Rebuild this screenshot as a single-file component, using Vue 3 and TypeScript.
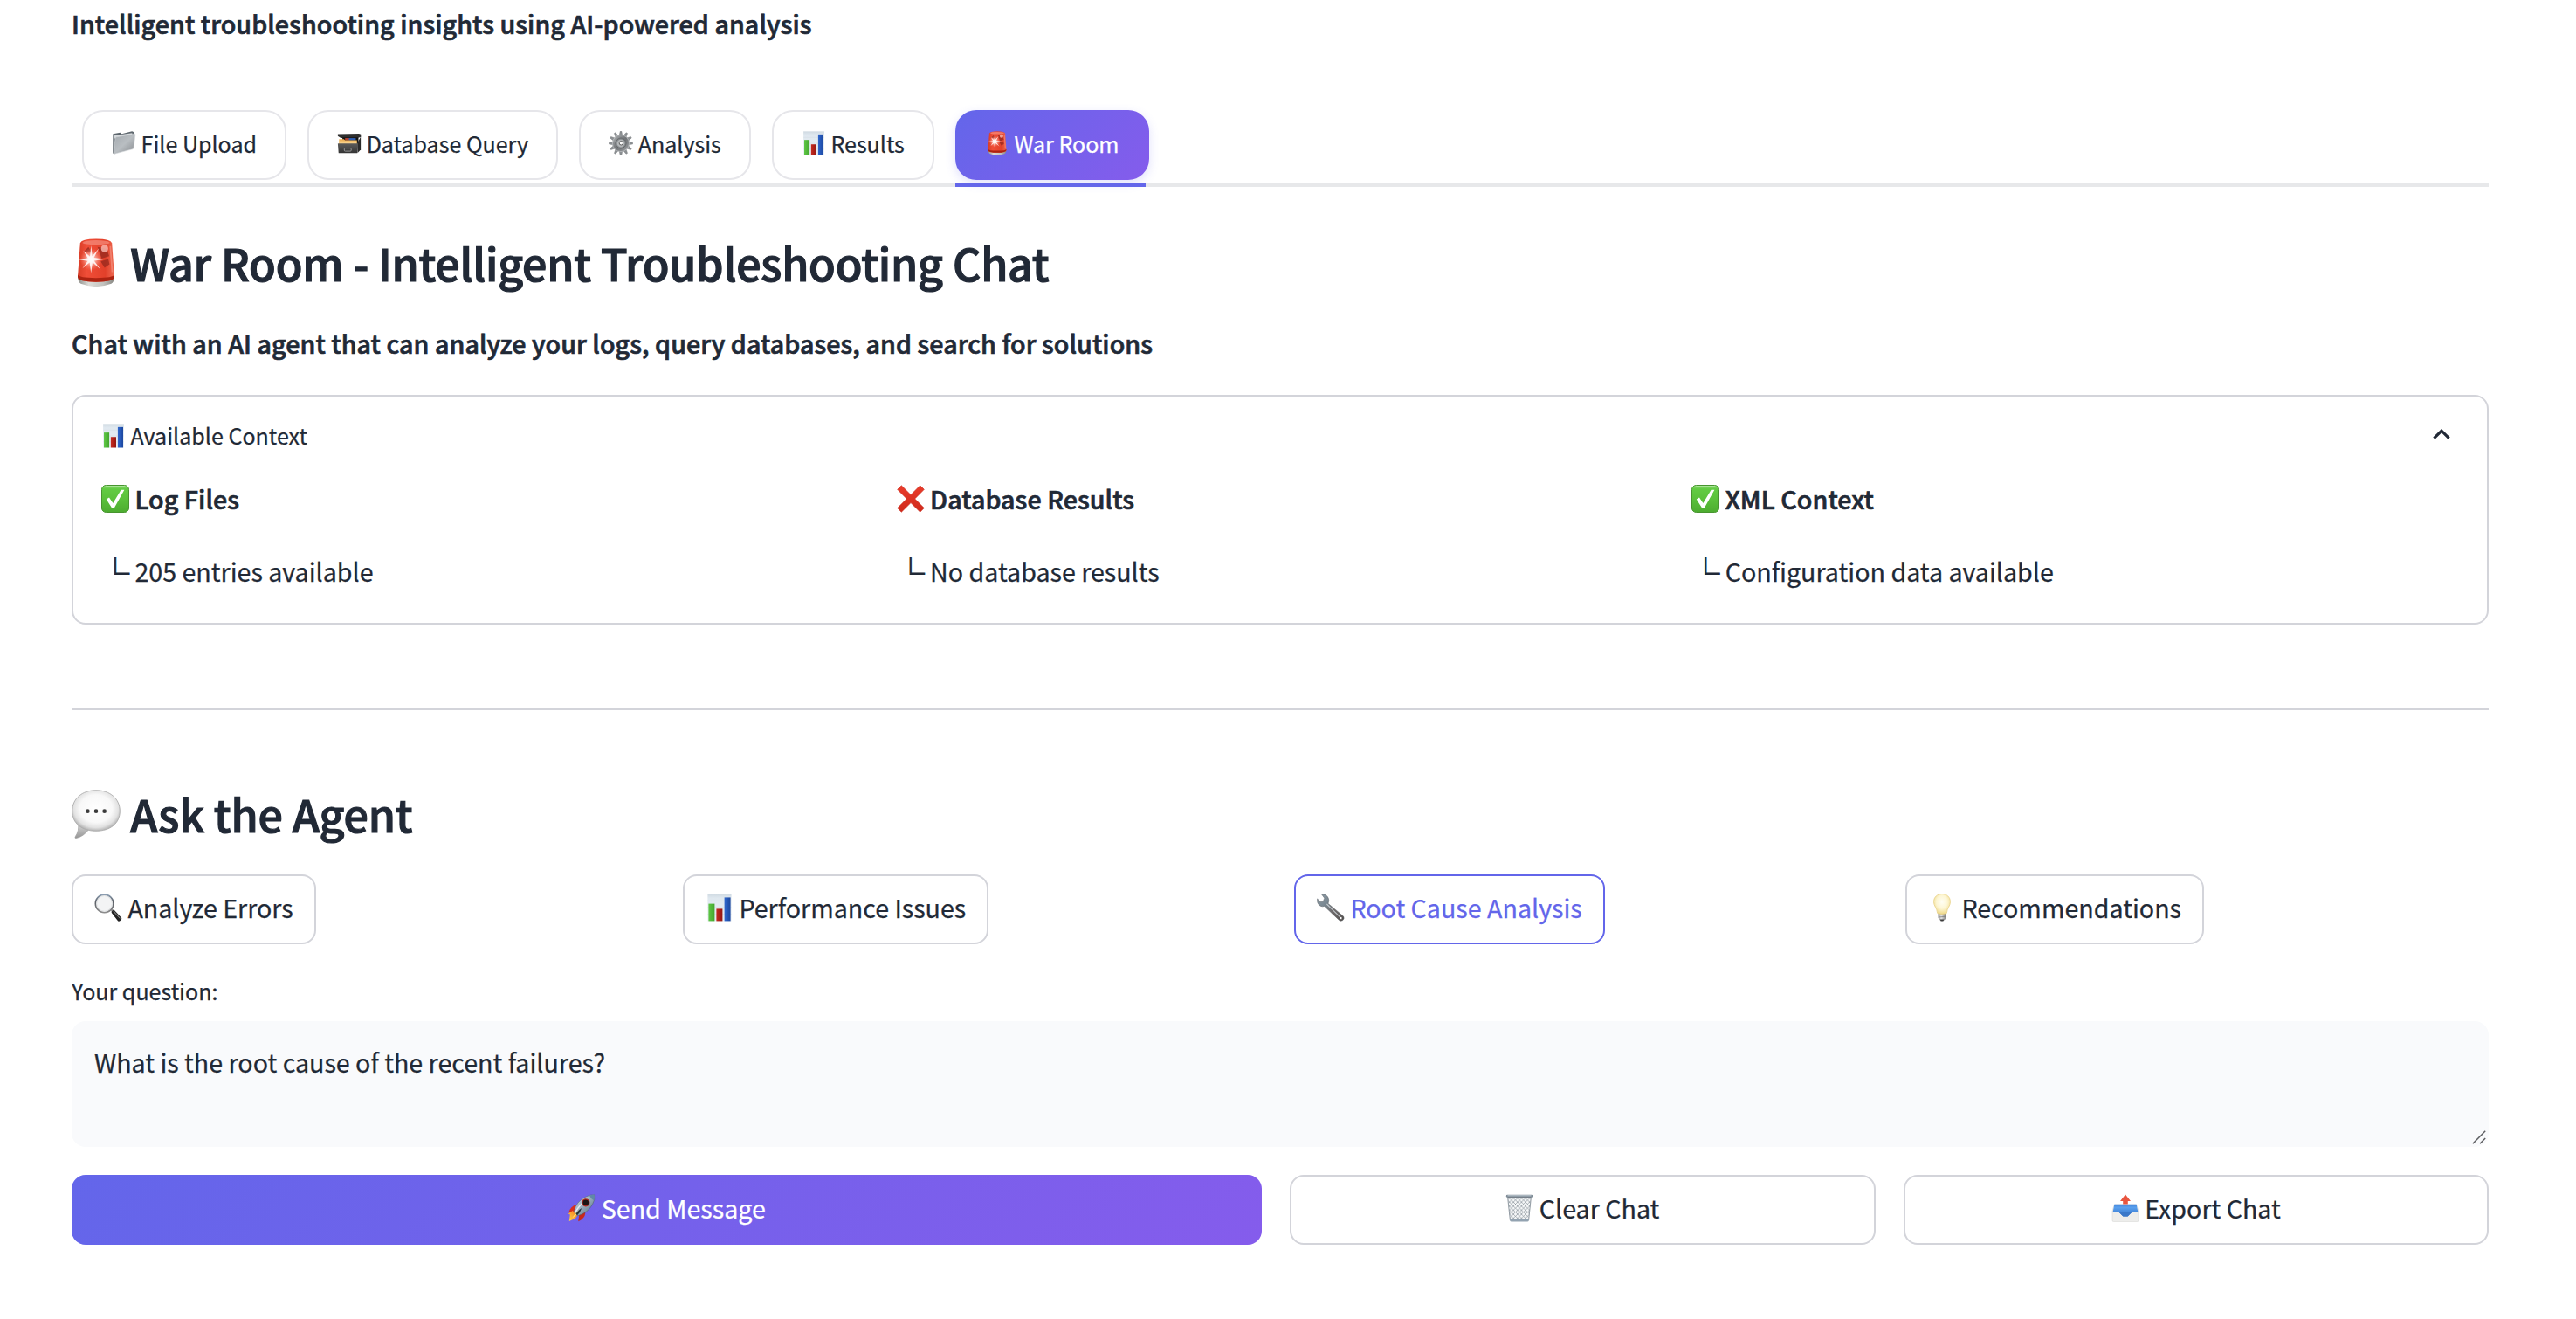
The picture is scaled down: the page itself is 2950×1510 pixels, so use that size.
<script setup lang="ts">
import { ref } from 'vue'

interface Item {
  icon: string
  label: string
  active?: boolean
}

interface ContextItem {
  icon: string
  title: string
  detail: string
}

const tabs: Item[] = [
  { icon: 'folder', label: 'File Upload' },
  { icon: 'cabinet', label: 'Database Query' },
  { icon: 'gear', label: 'Analysis' },
  { icon: 'chart', label: 'Results' },
  { icon: 'siren', label: 'War Room', active: true },
]

const context: ContextItem[] = [
  { icon: 'check', title: 'Log Files', detail: '205 entries available' },
  { icon: 'cross', title: 'Database Results', detail: 'No database results' },
  { icon: 'check', title: 'XML Context', detail: 'Configuration data available' },
]

const prompts: Item[] = [
  { icon: 'lens', label: 'Analyze Errors' },
  { icon: 'chart', label: 'Performance Issues' },
  { icon: 'wrench', label: 'Root Cause Analysis', active: true },
  { icon: 'bulb', label: 'Recommendations' },
]

const question = ref('What is the root cause of the recent failures?')
const gearTeeth = Array.from({ length: 12 }, (_, i) => i * 30)
</script>

<template>
  <svg class="sprites" width="0" height="0" aria-hidden="true">
    <defs>
      <linearGradient id="gFolder" x1="0" y1="0" x2="1" y2="1">
        <stop offset="0" stop-color="#a3a9ae" /><stop offset=".5" stop-color="#b9bec2" /><stop offset="1" stop-color="#85898d" />
      </linearGradient>
      <linearGradient id="gCab" x1="0" y1="0" x2="0" y2="1">
        <stop offset="0" stop-color="#5b5b5b" /><stop offset="1" stop-color="#343434" />
      </linearGradient>
      <linearGradient id="gGear" x1="0" y1="0" x2="1" y2="1">
        <stop offset="0" stop-color="#a9acae" /><stop offset=".5" stop-color="#6f7275" /><stop offset="1" stop-color="#96999c" />
      </linearGradient>
      <linearGradient id="gChart" x1="0" y1="0" x2="0" y2="1">
        <stop offset="0" stop-color="#cfd9e1" /><stop offset=".15" stop-color="#dfe8ef" /><stop offset="1" stop-color="#e9eff4" />
      </linearGradient>
      <linearGradient id="gGreenBar" x1="0" y1="0" x2="1" y2="0">
        <stop offset="0" stop-color="#5fc746" /><stop offset="1" stop-color="#43a62d" />
      </linearGradient>
      <linearGradient id="gRedBar" x1="0" y1="0" x2="1" y2="0">
        <stop offset="0" stop-color="#c52a20" /><stop offset="1" stop-color="#951711" />
      </linearGradient>
      <linearGradient id="gBlueBar" x1="0" y1="0" x2="1" y2="0">
        <stop offset="0" stop-color="#2f66cc" /><stop offset="1" stop-color="#1c479f" />
      </linearGradient>
      <linearGradient id="gSiren" x1="0" y1="0" x2="1" y2="0">
        <stop offset="0" stop-color="#d63b25" /><stop offset=".25" stop-color="#f04e38" /><stop offset=".75" stop-color="#e2402a" /><stop offset="1" stop-color="#ee6a52" />
      </linearGradient>
      <linearGradient id="gBase" x1="0" y1="0" x2="1" y2="0">
        <stop offset="0" stop-color="#8b8b86" /><stop offset=".3" stop-color="#dcdcd8" /><stop offset=".7" stop-color="#c2c2be" /><stop offset="1" stop-color="#858580" />
      </linearGradient>
      <radialGradient id="gGlow">
        <stop offset="0" stop-color="#fff" /><stop offset=".3" stop-color="#ffd9d2" stop-opacity=".8" /><stop offset="1" stop-color="#ff8f7c" stop-opacity="0" />
      </radialGradient>
      <linearGradient id="gCheck" x1="0" y1="0" x2="0" y2="1">
        <stop offset="0" stop-color="#8edb74" /><stop offset=".14" stop-color="#62cb42" /><stop offset=".5" stop-color="#5bc13b" /><stop offset="1" stop-color="#4dac30" />
      </linearGradient>
      <linearGradient id="gCross" x1="0" y1="0" x2="0" y2="1">
        <stop offset="0" stop-color="#ea3c2b" /><stop offset="1" stop-color="#cf2a1c" />
      </linearGradient>
      <radialGradient id="gBubble" cx=".5" cy=".45" r=".55">
        <stop offset="0" stop-color="#fff" /><stop offset=".62" stop-color="#f8f8f8" /><stop offset=".85" stop-color="#e2e2e2" /><stop offset="1" stop-color="#b5b5b5" />
      </radialGradient>
      <linearGradient id="gTail" x1="0" y1="0" x2="0" y2="1">
        <stop offset="0" stop-color="#d6d6d6" /><stop offset="1" stop-color="#969696" />
      </linearGradient>
      <linearGradient id="gHandle" x1="0" y1="1" x2="1" y2="0">
        <stop offset="0" stop-color="#0b0b0b" /><stop offset=".6" stop-color="#2b2b2b" /><stop offset="1" stop-color="#777" />
      </linearGradient>
      <linearGradient id="gRim" x1="0" y1="0" x2="0" y2="1">
        <stop offset="0" stop-color="#8ea0b4" /><stop offset=".4" stop-color="#5a5f66" /><stop offset="1" stop-color="#8c8c8c" />
      </linearGradient>
      <linearGradient id="gWrench" x1="0" y1="0" x2="1" y2="1">
        <stop offset="0" stop-color="#8f9da7" /><stop offset=".35" stop-color="#788690" /><stop offset=".6" stop-color="#6f6b6c" /><stop offset="1" stop-color="#55504f" />
      </linearGradient>
      <radialGradient id="gBulb" cx=".5" cy=".4" r=".6">
        <stop offset="0" stop-color="#fffef4" /><stop offset=".55" stop-color="#fdf6d3" /><stop offset="1" stop-color="#efd98a" />
      </radialGradient>
      <linearGradient id="gScrew" x1="0" y1="0" x2="1" y2="0">
        <stop offset="0" stop-color="#8d8d8d" /><stop offset=".4" stop-color="#e4e4e4" /><stop offset="1" stop-color="#7d7d7d" />
      </linearGradient>
      <linearGradient id="gHull" x1="0" y1="0" x2="1" y2="1">
        <stop offset="0" stop-color="#d9e4ec" /><stop offset=".45" stop-color="#9db2c2" /><stop offset="1" stop-color="#4f6678" />
      </linearGradient>
      <linearGradient id="gFlame" x1="1" y1="0" x2="0" y2="1">
        <stop offset="0" stop-color="#f8741d" /><stop offset="1" stop-color="#ffd84a" />
      </linearGradient>
      <linearGradient id="gTray" x1="0" y1="0" x2="0" y2="1">
        <stop offset="0" stop-color="#3f7fd6" /><stop offset=".25" stop-color="#5aa0ee" /><stop offset="1" stop-color="#2f70c8" />
      </linearGradient>
      <pattern id="pMesh" width="4.600" height="4.600" patternUnits="userSpaceOnUse">
        <path d="M0 0L4.600 4.600M4.600 0L0 4.600" stroke="#78838c" stroke-width=".6" />
      </pattern>
    </defs>

    <symbol id="folder" viewBox="0 0 32 32">
      <path d="M1.500 3.600L11 2l2 1.600L26.500 .4l2 .6L29 6 4 30 1.400 29z" fill="#5d666d" />
      <path d="M2.600 6L26.800 2.600l-.4 3L4 10z" fill="#d5d9dc" />
      <path d="M4.600 9.200Q4.800 8 6 7.800L29.600 3.600q1.400-.1 1.200 1.200L28.600 22q-.2 1.300-1.600 1.800L4 29.800q-1.600.2-1.400-1.200z" fill="url(#gFolder)" stroke="#d4d8da" stroke-width=".7" />
    </symbol>
    <symbol id="cabinet" viewBox="0 0 32 32">
      <path d="M1 4L28.600 3.400l2.600 1v3.200L27 9H5L1 6.600z" fill="#2e2e2e" />
      <path d="M7 8.400h21v10H7z" fill="#141414" />
      <path d="M10.500 9.200h6V12h-6z" fill="#b8402f" />
      <path d="M15.500 9.200h9V12h-9z" fill="#2f5fb4" />
      <path d="M2.600 10.600h6.400l1.400 1.400h15.600V19H2.600z" fill="#eeb35a" />
      <path d="M2.600 13.200h23V19h-23z" fill="#f7cf87" />
      <path d="M26.400 15.600L31 7.400v16.800L27 28.600z" fill="#2a2a2a" />
      <path d="M1 16.400h26.400l-.8 12.400H2z" fill="url(#gCab)" />
      <rect x="9.500" y="22.400" width="9" height="4" rx="1.200" fill="none" stroke="#989898" stroke-width="1.100" />
    </symbol>
    <symbol id="gear" viewBox="0 0 32 32">
      <path v-for="a in gearTeeth" :key="a" d="M13.900 6L15 .4h2L18.100 6z" fill="#8d9194" stroke="#6a6e71" stroke-width=".4" :transform="`rotate(${a} 16 16)`" />
      <circle cx="16" cy="16" r="9" fill="none" stroke="url(#gGear)" stroke-width="4.400" />
      <circle cx="16" cy="16" r="10.900" fill="none" stroke="#c3c6c8" stroke-width=".8" />
      <circle cx="16" cy="16" r="6.800" fill="#85898c" stroke="#4b4e50" stroke-width=".8" />
      <circle cx="16" cy="16" r="5" fill="#b4b7b9" />
      <circle cx="16.400" cy="15.800" r="2.500" fill="#fafafa" stroke="#4c4c4c" stroke-width="1" />
    </symbol>
    <symbol id="chart" viewBox="0 0 32 32">
      <path d="M2.400 .4h27.200v31.200H2.400z" fill="url(#gChart)" />
      <path d="M2.400 8.400h27.200M2.400 16h27.200M2.400 23.800h27.200" stroke="#d2dce4" stroke-width=".6" />
      <path d="M3.400 11.600h7v19.800h-7z" fill="url(#gGreenBar)" />
      <path d="M12.400 17.400h7v14h-7z" fill="url(#gRedBar)" />
      <path d="M21.600 4.400h7v27h-7z" fill="url(#gBlueBar)" />
    </symbol>
    <symbol id="siren" viewBox="0 0 32 32">
      <path d="M4 25.200q.2 3.400 2 4.400 9.800 3.800 20 0 1.800-1 2-4.400z" fill="url(#gBase)" />
      <path d="M5.600 3.200Q6.400 .3 16 .3t10.400 2.900L28 25q-.2 3.400-12 3.400T4 25z" fill="url(#gSiren)" />
      <path d="M4.100 23.600q.6 2.200 11.900 2.200t11.900-2.200L28 25.200q-.4 3.200-12 3.200T4 25.200z" fill="#ac2312" />
      <path d="M7 2.800Q8.600 1.200 16 1.200t9 1.600Q23.600 4 16 4T7 2.800z" fill="#f4897a" opacity=".75" />
      <path d="M17 5.500l6 1.200 1.600 4.800-5 1.600zM19 15l5-1.600.8 3.400-3.200 2.400zM7.600 9L11 5.600l2.400 3.800z" fill="#94281d" opacity=".75" />
      <circle cx="21.600" cy="6.600" r="2.300" fill="#f7b4aa" opacity=".85" />
      <circle cx="12.800" cy="13.600" r="7.200" fill="url(#gGlow)" />
      <path d="M12.800 4.600l.7 6.900 4.300-4.900-3.200 6 7.400 1-7.300.9 4.300 5.800-5.300-4.700-1 7-.9-6.900-4.700 3.900 3.500-4.900-6.400-1 6.400-.9-3-5 4.400 4.100z" fill="#fff" opacity=".85" />
      <path d="M25.300 5l1.300 17" stroke="#f79a8a" stroke-width="1" opacity=".6" />
    </symbol>
    <symbol id="check" viewBox="0 0 32 32">
      <rect x=".5" y=".5" width="31" height="31" rx="5" fill="url(#gCheck)" stroke="#47952f" stroke-width="1" />
      <path d="M3.500 3Q4.500 1.700 6 1.700h20q1.500 0 2.500 1.300" fill="none" stroke="#b4e8a2" stroke-width="1.100" />
      <path d="M5.800 16.400l3.200-1.900 4.400 6.500L22.600 5.800h3.800L14.500 27h-2.100z" fill="#fff" />
    </symbol>
    <symbol id="cross" viewBox="0 0 32 32">
      <path d="M5.300 .8L16 11.400 26.700 .8 31.300 5.300 20.700 16l10.600 10.600-4.600 4.600L16 20.600 5.300 31.200.7 26.600 11.300 16 .7 5.300z" fill="url(#gCross)" stroke="#c72a1c" stroke-width=".6" />
    </symbol>
    <symbol id="bubble" viewBox="0 0 32 32">
      <path d="M4.200 22.400q1 4.200-1.900 8.600-.3.900.8.700 4.500-.8 8.600-6.200z" fill="url(#gTail)" stroke="#a2a2a2" stroke-width=".4" />
      <path d="M16 .4C25.200.4 31.600 6 31.600 14S25.500 27 16 27 .4 22 .4 14 6.800.4 16 .4z" fill="url(#gBubble)" stroke="#acacac" stroke-width=".5" />
      <circle cx="10.500" cy="14.100" r="1.350" fill="#3b3b3b" /><circle cx="16" cy="14.100" r="1.350" fill="#3b3b3b" /><circle cx="21.500" cy="14.100" r="1.350" fill="#3b3b3b" />
    </symbol>
    <symbol id="lens" viewBox="0 0 32 32">
      <path d="M18.500 19.500l2-2 3 2.600-2.200 2.200z" fill="#9a9a9a" />
      <path d="M19.600 21.800q0-2.400 2.800-3.200L31 27.400q.8 1.600-.6 3.200t-3.200 1z" fill="url(#gHandle)" />
      <path d="M22 20.400l7.600 8" stroke="#b9b9b9" stroke-width=".8" />
      <circle cx="11.600" cy="11.400" r="10.300" fill="#f3f4f5" stroke="url(#gRim)" stroke-width="1.600" />
      <circle cx="11.600" cy="11.400" r="8.900" fill="none" stroke="#dadcde" stroke-width=".9" />
    </symbol>
    <symbol id="wrench" viewBox="0 0 32 32">
      <path d="M7.800 .8L5.200 .5 8.800 5.200l-1.600 4-4.200.3L.7 5.800q-1 6 3.500 8.400 2.500 1.200 4.400.2l16.700 15.800q2 2 4.400.4 2.400-2.200.8-4.600L13 11.400q1.800-4.600-.5-7.700Q10.400 1 7.800.8z" fill="url(#gWrench)" stroke="#5c6266" stroke-width=".5" />
      <path d="M11.400 12l15 14.600" stroke="#c3c9cd" stroke-width="1.100" />
      <circle cx="27.600" cy="28" r="1.500" fill="#fff" stroke="#3f3b3a" stroke-width=".6" />
    </symbol>
    <symbol id="bulb" viewBox="0 0 32 32">
      <path d="M11.500 22h9v5.500q-.6 2.500-2.700 3.200-1.800.8-3.600 0-2.100-.7-2.700-3.200z" fill="url(#gScrew)" />
      <path d="M12 24.400l8-.8M12 27l8-.8" stroke="#777" stroke-width=".7" />
      <path d="M13.600 29.600h4.800L17.400 31.500h-2.800z" fill="#3c3c3c" />
      <path d="M16 .5c5.600 0 9.500 3.700 9.500 9 0 4.500-3.700 7-4.200 12.900q-2.300 1-5.300 1t-5.300-1C10.200 16.500 6.500 14 6.500 9.500c0-5.300 3.900-9 9.500-9z" fill="url(#gBulb)" stroke="#e8d289" stroke-width=".8" />
    </symbol>
    <symbol id="rocket" viewBox="0 0 32 32">
      <path d="M14 12.500Q7 11 2.800 17.500L1 21.200l8.500-2z" fill="#d8301e" />
      <path d="M20 18.500q1.500 7-4.800 11.200l-3 1.500 1.300-8.700z" fill="#c9281a" />
      <path d="M5.800 19L.8 22.400l2 1L1.800 31l7-3.200 2.500-3.200z" fill="url(#gFlame)" />
      <path d="M7.200 20.200Q10 8 21 3q5.500-2.600 9.600-2.200Q32 6 28.200 12.600 22.500 22 11.400 24.800z" fill="url(#gHull)" stroke="#49596a" stroke-width=".5" />
      <path d="M24.800 1.500q3.200-1 5.800-.7.600 3.300-.6 6.500-3.300-1.800-5.200-5.800z" fill="#5f88a8" />
      <path d="M9 20.500Q14 12 22 5.500" stroke="#fff" stroke-width="1.600" fill="none" opacity=".75" />
      <circle cx="20.800" cy="9.800" r="4" fill="#1c1414" stroke="#b72c22" stroke-width="1.300" />
      <path d="M5.200 27.500Q9 21 14.500 17.500 12.500 23 5.200 27.500z" fill="#ffe36c" />
      <path d="M9.400 22.600q3.200-5 6.800-6.600-1.600 5-5.200 8.200z" fill="#25303a" />
    </symbol>
    <symbol id="bin" viewBox="0 0 32 32">
      <path d="M2.600 3.500h26.800L26.600 30H5.400z" fill="#f4f6f7" />
      <path d="M2.600 3.500h26.800L26.600 30H5.400z" fill="url(#pMesh)" stroke="#87919a" stroke-width=".9" />
      <path d="M5 28.400h22l-.4 2q-.2 1.100-1.400 1.100H6.800q-1.200 0-1.400-1.100z" fill="#93a3b1" />
      <rect x=".8" y=".8" width="30.400" height="3" rx="1.400" fill="#7f8c97" />
      <path d="M2.500 1.800h27" stroke="#d0d9e0" stroke-width=".8" />
      <path d="M2.600 4.200h26.800" stroke="#4c545b" stroke-width=".8" />
    </symbol>
    <symbol id="tray" viewBox="0 0 32 32">
      <path d="M1 19.500L3.300 12h25.400L31 19.500V30q0 1.600-1.600 1.600H2.600Q1 31.600 1 30z" fill="#ededeb" stroke="#d0d0ce" stroke-width=".5" />
      <path d="M3.400 11.800h25.200L30.400 20.500h-6.600L18.600 25.600h-5.200L8.200 20.500H1.600z" fill="url(#gTray)" />
      <path d="M8.400 20.500h15.200L18.600 25.600h-5.200z" fill="#3a78c9" />
      <path d="M16 .6l6 7.400h-3.200v3.500h-5.600V8H10z" fill="#e8553f" />
    </symbol>
  </svg>

  <main class="page">
    <p class="tagline strong">Intelligent troubleshooting insights using AI-powered analysis</p>

    <nav class="tabs">
      <button v-for="t in tabs" :key="t.label" class="tab" :class="{ active: t.active }">
        <svg class="emoji"><use :href="`#${t.icon}`" /></svg><span>{{ t.label }}</span>
      </button>
    </nav>

    <h2 class="title war"><svg class="emoji"><use href="#siren" /></svg><span>War Room - Intelligent Troubleshooting Chat</span></h2>
    <p class="lead strong">Chat with an AI agent that can analyze your logs, query databases, and search for solutions</p>

    <section class="panel">
      <header class="panel-head">
        <div class="small"><svg class="emoji"><use href="#chart" /></svg><span>Available Context</span></div>
        <svg class="chevron" viewBox="0 0 20 12"><path d="M1.400 10.600L10 2.200l8.600 8.400" fill="none" stroke="#212936" stroke-width="3.200" /></svg>
      </header>
      <div class="context">
        <div v-for="c in context" :key="c.title">
          <p class="strong"><svg class="emoji"><use :href="`#${c.icon}`" /></svg><span>{{ c.title }}</span></p>
          <p class="detail"><span class="branch">└</span><span>{{ c.detail }}</span></p>
        </div>
      </div>
    </section>

    <hr class="rule" />

    <h2 class="title ask"><svg class="emoji"><use href="#bubble" /></svg><span>Ask the Agent</span></h2>

    <div class="prompts">
      <div v-for="p in prompts" :key="p.label">
        <button class="btn" :class="{ focus: p.active }">
          <svg class="emoji"><use :href="`#${p.icon}`" /></svg><span>{{ p.label }}</span>
        </button>
      </div>
    </div>

    <label class="label small">Your question:</label>
    <div class="field">
      <textarea v-model="question" class="input" spellcheck="false"></textarea>
      <svg class="grip" viewBox="0 0 16 16"><path d="M.8 15.200L15.200.8M9 15.200l6.200-6.200" stroke="#5c5d60" stroke-width="1.500" fill="none" /></svg>
    </div>

    <div class="actions">
      <button class="btn primary"><svg class="emoji"><use href="#rocket" /></svg><span>Send Message</span></button>
      <button class="btn"><svg class="emoji"><use href="#bin" /></svg><span>Clear Chat</span></button>
      <button class="btn"><svg class="emoji"><use href="#tray" /></svg><span>Export Chat</span></button>
    </div>
  </main>
</template>

<style>
body {
  background: #fff;
}
</style>

<style scoped>
.sprites {
  position: absolute;
}
.page {
  --s: 32;
  box-sizing: border-box;
  width: 2950px;
  height: 1510px;
  padding: 3px 100px 0 82px;
  overflow: hidden;
  display: flex;
  flex-direction: column;
  background: #fff;
  color: #212936;
  font-family: "Noto Sans CJK SC", "Noto Sans", sans-serif;
  font-size: calc(var(--s) * 0.895px);
  line-height: 48px;
  -webkit-text-stroke: 0.25px currentColor;
}
p,
h2,
hr {
  margin: 0;
}
.emoji {
  width: calc(var(--s) * 1px);
  height: calc(var(--s) * 1px);
  margin-right: calc(var(--s) * 0.2px);
  vertical-align: calc(var(--s) * -0.125px);
}
.strong {
  font-weight: 500;
  letter-spacing: 0.07px;
  -webkit-text-stroke: 0.7px currentColor;
  white-space: nowrap;
}
.small,
.tab {
  --s: 28;
  font-size: calc(var(--s) * 0.895px);
  line-height: 40px;
}
.tagline {
  height: 48px;
  margin-bottom: 75px;
}
.tabs {
  display: flex;
  gap: 24px;
  height: 84px;
  padding-left: 12px;
  border-bottom: 4px solid #e7e8ea;
}
button {
  box-sizing: border-box;
  font-family: inherit;
  color: inherit;
  background: #fff;
  white-space: nowrap;
  -webkit-text-stroke: 0.25px currentColor;
}
.tab {
  position: relative;
  height: 80px;
  padding: 0 32px 5px;
  border: 2px solid #e6e6ea;
  border-radius: 24px;
}
.tab.active {
  padding: 0 34px 5px;
  border: 0;
  color: #fff;
  background: linear-gradient(135deg, #6366ea, #855cec);
  box-shadow: 0 4px 12px rgba(99, 102, 241, 0.2);
}
.tab.active::after {
  content: "";
  position: absolute;
  left: 0;
  right: 4px;
  top: 84px;
  height: 4px;
  background: #6366ea;
}
.title {
  --s: 56;
  height: 68px;
  font-size: calc(var(--s) * 0.895px);
  line-height: 68px;
  font-weight: 500;
  letter-spacing: -0.2px;
  -webkit-text-stroke: 1.2px currentColor;
  white-space: nowrap;
}
.war {
  margin-top: 52px;
}
.lead {
  margin-top: 35px;
  height: 48px;
}
.panel {
  box-sizing: border-box;
  height: 263px;
  margin-top: 35px;
  padding: 24px 32px 0;
  border: 2px solid #d3d4da;
  border-radius: 16px;
}
.panel-head {
  display: flex;
  justify-content: space-between;
  height: 69px;
}
.chevron {
  width: 20px;
  height: 12px;
  margin: 13px 10px 0 0;
}
.context {
  display: grid;
  grid-template-columns: repeat(3, 1fr);
  gap: 32px;
}
.detail {
  margin-top: 35px;
}
.branch {
  display: inline-block;
  width: 32px;
  margin-right: 6.4px;
  font-size: 32px;
  line-height: 32px;
  transform: scaleY(1.15);
  transform-origin: 0 0;
  -webkit-text-stroke: 1px currentColor;
}
.rule {
  margin-top: 96px;
  border: 0;
  height: 2px;
  background: #d3d4da;
}
.ask {
  margin-top: 84px;
}
.prompts {
  display: grid;
  grid-template-columns: repeat(4, 1fr);
  gap: 32px;
  margin-top: 36px;
}
.btn {
  height: 80px;
  padding: 0 24px 4px;
  border: 2px solid #d3d4da;
  border-radius: 16px;
  font-size: calc(var(--s) * 0.895px);
  line-height: 48px;
}
.prompts .btn {
  display: block;
}
.btn.focus {
  border-color: #6366ea;
  color: #6366ea;
}
.label {
  margin-top: 33px;
}
.field {
  position: relative;
  height: 144px;
  margin-top: 15px;
}
.input {
  display: block;
  box-sizing: border-box;
  width: 100%;
  height: 144px;
  padding: 23px 26px;
  border: 0;
  border-radius: 16px;
  outline: 0;
  resize: none;
  background: #f9fafc;
  color: inherit;
  font: inherit;
}
.grip {
  position: absolute;
  right: 3px;
  bottom: 3px;
  width: 16px;
  height: 16px;
}
.actions {
  display: grid;
  grid-template-columns: 1363.2px 1fr 1fr;
  gap: 32px;
  margin-top: 32px;
}
.btn.primary {
  border: 0;
  color: #fff;
  background: linear-gradient(135deg, #6366ea, #855cec);
}
</style>
